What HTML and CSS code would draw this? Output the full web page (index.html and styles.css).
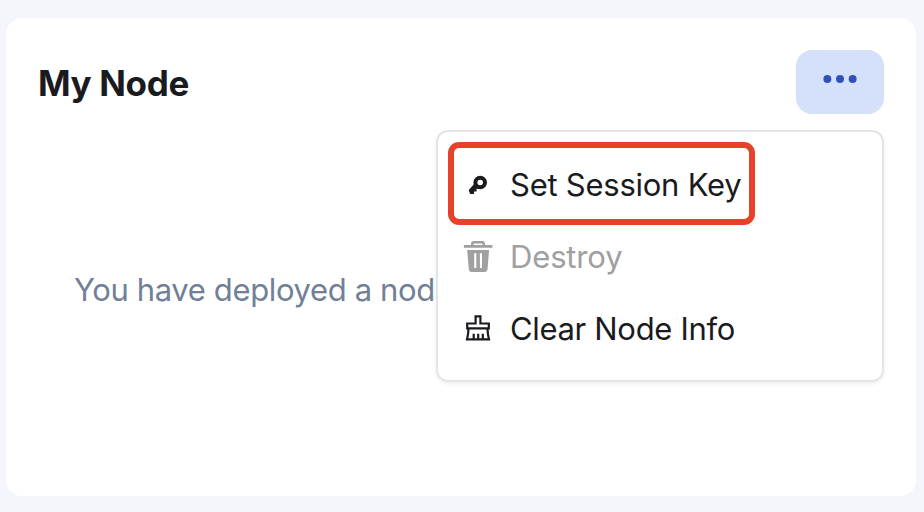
FILE: index.html
```html
<!DOCTYPE html>
<html lang="en">
<head>
<meta charset="utf-8">
<title>My Node</title>
<link rel="stylesheet" href="styles.css">
</head>
<body>
<main class="card">
  <header class="card-header">
    <h1 class="title">My Node</h1>
    <div class="actions">
      <button class="more" aria-label="More">
        <svg width="34" height="8" viewBox="0 0 34 8"><circle cx="4.4" cy="4" r="4"/><circle cx="17" cy="4" r="4"/><circle cx="29.6" cy="4" r="4"/></svg>
      </button>
      <ul class="menu">
        <li class="item">
          <svg class="icon" viewBox="0 0 32 32"><circle cx="18.2" cy="13.5" r="4.8" fill="none" stroke="currentColor" stroke-width="4"/><path fill="currentColor" d="M12.3 14.8 7.2 20.4Q6.6 21.2 7 22.2L8.2 25H12V22.6H14.6V19.7H17L18 18.4Z"/></svg>
          <span class="label key">Set Session Key</span>
        </li>
        <li class="item disabled">
          <svg class="icon" viewBox="0 .8 32 32"><path fill="none" stroke="currentColor" stroke-width="2.5" d="M10.2 5.8V4Q10.2 2 12.3 2H19.7Q21.8 2 21.8 4V5.8"/><path fill="currentColor" fill-rule="evenodd" d="M1.9 4.9H30.4V7.5H1.9ZM5.2 9.7H27.1L25.5 29.4Q25.2 31.7 23 31.7H9.3Q7.1 31.7 6.8 29.4ZM12.2 13V27.9H14.3V13ZM17.9 13V27.9H20V13Z"/></svg>
          <span class="label destroy">Destroy</span>
        </li>
        <li class="item">
          <svg class="icon" viewBox="0 .8 32 32"><path fill="none" stroke="currentColor" stroke-width="2.2" d="M5.2 16.2V11.3H13.6V4.2H18.4V11.3H26.8V16.2ZM6.5 16.2Q6.4 21.7 5 27.2H27Q25.6 21.7 25.5 16.2M11.7 27V21.5M16.2 27V21.5M20.8 27V21.5"/></svg>
          <span class="label clear">Clear Node Info</span>
        </li>
      </ul>
      <div class="highlight"></div>
    </div>
  </header>
  <p class="message">You have deployed a nod</p>
</main>
</body>
</html>
```
FILE: styles.css
```css
* { box-sizing: border-box; }
body {
  margin: 0;
  height: 512px;
  padding: 18px 8px 16px 6px;
  background: #f5f6fb;
  color: #1a1b1e;
  font-family: Inter, "Liberation Sans", sans-serif;
  overflow: hidden;
}
.card {
  height: 478px;
  padding: 32px;
  border-radius: 16px;
  background: #fff;
}
.card-header {
  display: flex;
  justify-content: space-between;
  height: 64px;
}
.title {
  margin: 0;
  font-size: 35px;
  line-height: 67px;
  font-weight: 700;
  letter-spacing: -0.35px;
}
.actions { position: relative; }
.more {
  display: flex;
  justify-content: center;
  width: 88px;
  height: 64px;
  padding: 25px 0 0;
  border: 0;
  border-radius: 16px;
  background: #d5e0fa;
  fill: #3052b8;
}
.menu {
  position: absolute;
  top: 80px;
  right: 0;
  width: 448px;
  height: 252px;
  margin: 0;
  padding: 17px 24px 15px;
  border: 2px solid #e2e5ea;
  border-radius: 12px;
  background: #fff;
  box-shadow: 0 2px 4px rgba(30, 40, 60, .07);
  list-style: none;
}
.item {
  display: flex;
  align-items: center;
  gap: 16px;
  height: 72px;
}
.disabled { color: #a0a0a0; }
.icon {
  flex: none;
  width: 32px;
  height: 32px;
}
.label {
  padding-bottom: 1px;
  font-size: 31px;
  line-height: 40px;
  letter-spacing: -0.25px;
  white-space: nowrap;
}
.destroy { letter-spacing: -0.15px; }
.clear { letter-spacing: -0.33px; }
.highlight {
  position: absolute;
  top: 92px;
  right: 129px;
  width: 307px;
  height: 83px;
  border: 6px solid #e8412a;
  border-radius: 11px;
}
.message {
  margin: 156px 0 0 36px;
  color: #718096;
  font-size: 31px;
  line-height: 40px;
  letter-spacing: -0.37px;
  white-space: nowrap;
}
```
